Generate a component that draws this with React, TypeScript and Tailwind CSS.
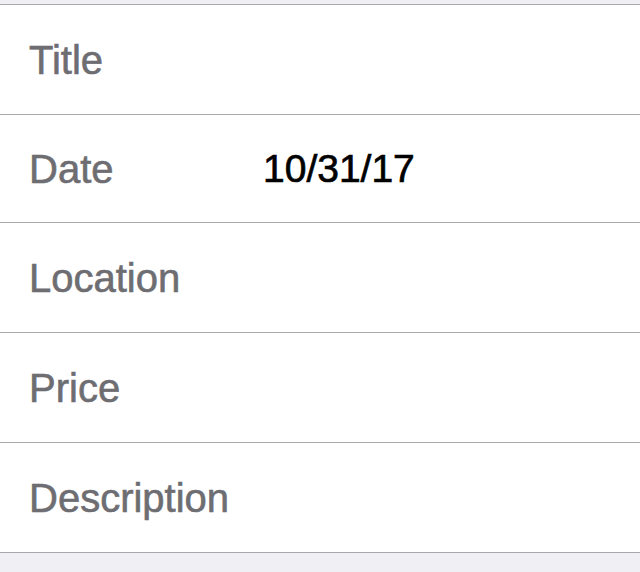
import React from 'react';

const rows = [
  { label: 'Title', value: '', h: 'h-[109px]' },
  { label: 'Date', value: '10/31/17', h: 'h-[108px] border-t' },
  { label: 'Location', value: '', h: 'h-[110px] border-t' },
  { label: 'Price', value: '', h: 'h-[110px] border-t' },
  { label: 'Description', value: '', h: 'h-[110px] border-t' },
];

const App = () => {
  return (
    <div className="w-[640px] h-[572px] bg-[#efeff4] pt-[4px] font-['Liberation_Sans',Arial,sans-serif]">
      <div className="bg-white border-t border-b border-[#a9a9ac]">
        {rows.map((row) => (
          <div key={row.label} className={`flex items-center border-[#a9a9ac] ${row.h}`}>
            <span className="w-[263px] pl-[29px] text-[40px] text-[#6d6d72] leading-none [-webkit-text-stroke:0.6px_#6d6d72]">
              {row.label}
            </span>
            <span className="text-[39px] text-black leading-none [-webkit-text-stroke:0.7px_#000]">{row.value}</span>
          </div>
        ))}
      </div>
    </div>
  );
};

export default App;
